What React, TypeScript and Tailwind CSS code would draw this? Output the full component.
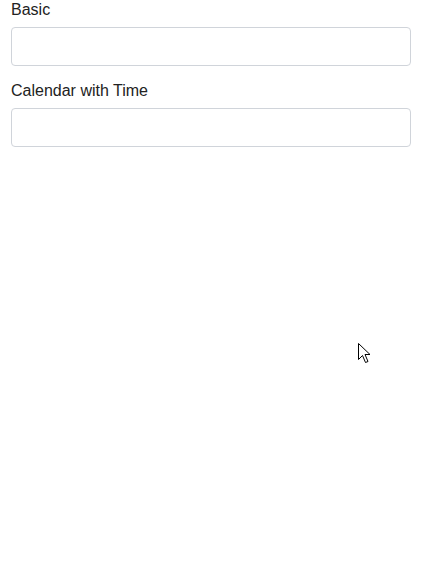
const Field = ({ label, first }: { label: string; first?: boolean }) => (
  <div className={first ? '' : 'mt-[15px]'}>
    <label className="block pt-px leading-[18px] mb-[8px] text-base text-[#222]">{label}</label>
    <input
      type="text"
      className="block w-full h-[39px] px-3 rounded-[4px] border border-[#d0d4da] bg-white outline-none"
    />
  </div>
);

const App = () => {
  return (
    <div className="relative min-h-[562px] bg-white font-['Liberation_Sans',Arial,sans-serif]">
      <div className="pl-[11px] pr-[14px]">
        <Field label="Basic" first />
        <Field label="Calendar with Time" />
      </div>

      {/* mouse pointer captured in the screenshot */}
      <svg
        className="absolute left-[358px] top-[343px]"
        width="13"
        height="20"
        viewBox="0 0 13 20"
      >
        <path
          d="M0.5 0.5 L0.5 16.5 L4.5 12.5 L7.5 19.5 L10 18.5 L7 11.5 L12 11.5 Z"
          fill="#fff"
          stroke="#000"
          strokeWidth="1"
          strokeLinejoin="miter"
        />
      </svg>
    </div>
  );
};

export default App;
